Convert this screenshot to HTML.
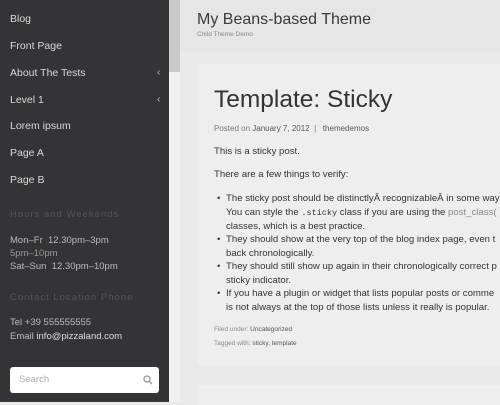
<!DOCTYPE html>
<html><head><style>
*{margin:0;padding:0;box-sizing:border-box}
body{width:500px;height:402px;overflow:hidden;background:#e9e9ea;font-family:"Liberation Sans",sans-serif;position:relative}
#sb{position:absolute;left:0;top:0;width:169px;height:402px;background:#343436;color:#d8d8d8}
#sb .m{position:absolute;left:10px;font-size:10.5px}
#sb .ch{position:absolute;left:157px;font-size:10px;color:#bbb}
.w{position:absolute;left:10px;font-size:9.5px;color:#bbb}
#scr{position:absolute;left:169px;top:0;width:11px;height:402px;background:#f1f1f1}
#scr div{height:72px;background:#c9c9c9}
#hd{position:absolute;left:180px;top:0;width:320px;height:52px;background:#e6e6e7}
.t{position:absolute;left:197px;top:11px;font-size:16px;color:#3a3a3a}
.st{position:absolute;left:197px;top:31px;font-size:6.5px;color:#888}
#card{position:absolute;left:197px;top:64px;width:303px;height:301px;background:#eeeeef}
#card2{position:absolute;left:197px;top:385px;width:303px;height:20px;background:#eeeeef}
.p{position:absolute;left:214px;color:#333;font-size:9.6px;white-space:nowrap}
.b{position:absolute;left:226px;font-size:9.6px;color:#333;white-space:nowrap;line-height:13.5px}
.b:before{content:"•";position:absolute;left:-9px}
</style></head><body>
<div id="sb">
<div class="m" style="top:13px">Blog</div>
<div class="m" style="top:40px">Front Page</div>
<div class="m" style="top:67px">About The Tests</div><div class="ch" style="top:67px">‹</div>
<div class="m" style="top:94px">Level 1</div><div class="ch" style="top:94px">‹</div>
<div class="m" style="top:120px">Lorem ipsum</div>
<div class="m" style="top:147px">Page A</div>
<div class="m" style="top:174px">Page B</div>
<div class="w" style="top:209px;color:#555;letter-spacing:1px">Hours and Weekends</div>
<div class="w" style="top:235px">Mon–Fr &nbsp;12.30pm–3pm</div>
<div class="w" style="top:248px;color:#999">5pm–10pm</div>
<div class="w" style="top:261px">Sat–Sun &nbsp;12.30pm–10pm</div>
<div class="w" style="top:292px;color:#555;letter-spacing:1px">Contact Location Phone</div>
<div class="w" style="top:317px">Tel +39 555555555</div>
<div class="w" style="top:331px">Email <span style="color:#ddd">info@pizzaland.com</span></div>
<div style="position:absolute;left:10px;top:367px;width:149px;height:26px;background:#fff;border-radius:3px">
<span style="position:absolute;left:9px;top:7px;font-size:9.5px;color:#aaa">Search</span>
<svg style="position:absolute;right:6px;top:8px" width="10" height="10" viewBox="0 0 10 10"><circle cx="4" cy="4" r="3" fill="none" stroke="#999" stroke-width="1.3"/><path d="M6.3 6.3L9 9" stroke="#999" stroke-width="1.4"/></svg>
</div>
</div>
<div id="scr"><div></div></div>
<div id="hd"></div>
<div class="t">My Beans-based Theme</div>
<div class="st">Child Theme Demo</div>
<div id="card"></div><div id="card2"></div>
<div class="p" style="top:86px;font-size:24.5px;color:#333">Template: Sticky</div>
<div class="p" style="top:124px;font-size:8px;color:#777">Posted on <span style="color:#555">January 7, 2012</span> &nbsp;| &nbsp; <span style="color:#555">themedemos</span></div>
<div class="p" style="top:146px">This is a sticky post.</div>
<div class="p" style="top:169px">There are a few things to verify:</div>
<div class="b" style="top:192px">The sticky post should be distinctlyÂ recognizableÂ in some way<br>You can style the <span style="font-family:'Liberation Mono';font-size:8.5px">.sticky</span> class if you are using the <span style="color:#888">post_class(</span><br>classes, which is a best practice.</div>
<div class="b" style="top:233px">They should show at the very top of the blog index page, even t<br>back chronologically.</div>
<div class="b" style="top:260px">They should still show up again in their chronologically correct p<br>sticky indicator.</div>
<div class="b" style="top:287px">If you have a plugin or widget that lists popular posts or comme<br>is not always at the top of those lists unless it really is popular.</div>
<div class="p" style="top:326px;font-size:6.5px;color:#888">Filed under: <span style="color:#555">Uncategorized</span></div>
<div class="p" style="top:340px;font-size:6.5px;color:#888">Tagged with: <span style="color:#555">sticky, template</span></div>
</body></html>
